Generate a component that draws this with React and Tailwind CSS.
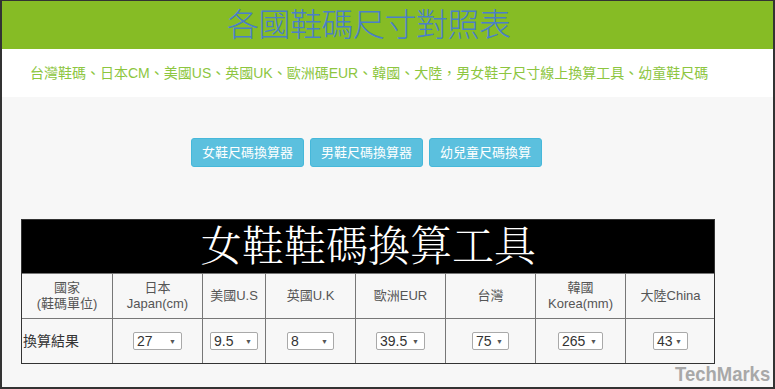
const sans = "font-['Liberation_Sans','Noto_Sans_CJK_TC',sans-serif]";

const columns = [
  { w: 'w-[90px]', lines: ['國家', '(鞋碼單位)'] },
  { w: 'w-[90px]', lines: ['日本', 'Japan(cm)'] },
  { w: 'w-[63px]', lines: ['美國U.S'] },
  { w: 'w-[90px]', lines: ['英國U.K'] },
  { w: 'w-[90px]', lines: ['歐洲EUR'] },
  { w: 'w-[90px]', lines: ['台灣'] },
  { w: 'w-[90px]', lines: ['韓國', 'Korea(mm)'] },
  { w: 'w-[90px]', lines: ['大陸China'] },
];

const picks = [
  { v: '27', w: 'w-[49px]' },
  { v: '9.5', w: 'w-[48px]' },
  { v: '8', w: 'w-[47px]' },
  { v: '39.5', w: 'w-[49px]' },
  { v: '75', w: 'w-[37px]' },
  { v: '265', w: 'w-[45px]' },
  { v: '43', w: 'w-[35px]' },
];

function FakeSelect({ v, w }) {
  return (
    <div className={`${w} h-[18px] mx-auto flex items-center justify-between border border-[#a9a9a9] rounded-[2px] bg-white pl-[3px] pr-[5px] text-[14px] leading-none text-[#333]`}>
      <span>{v}</span>
      <span className="text-[7px] text-[#555]">▼</span>
    </div>
  );
}

export default function App() {
  return (
    <div className={`relative w-[775px] h-[389px] overflow-hidden bg-[#f7f7f7] border-t border-x-2 border-b-2 border-[#333] ${sans}`}>
      {/* title band */}
      <div className="h-[48px] bg-[#86bc25] pl-[225px] flex items-center">
        <h1 className="text-[32px] leading-none font-light text-[#4a7fc8] tracking-[-0.5px]">各國鞋碼尺寸對照表</h1>
      </div>
      <div className="h-[48px] bg-white pl-[28px] flex items-center">
        <p className="text-[14px] text-[#8dc63f]">台灣鞋碼、日本CM、美國US、英國UK、歐洲碼EUR、韓國、大陸，男女鞋子尺寸線上換算工具、幼童鞋尺碼</p>
      </div>

      {/* buttons */}
      <div className="flex gap-[6px] pl-[189px] pt-[41px]">
        {['女鞋尺碼換算器', '男鞋尺碼換算器', '幼兒童尺碼換算'].map((t) => (
          <button key={t} className="w-[113px] h-[29px] rounded-[3px] bg-[#5bc0de] border border-[#46b8da] text-white text-[13px]">
            {t}
          </button>
        ))}
      </div>

      {/* converter table */}
      <div className="ml-[19px] mt-[52px] w-[694px] border border-[#333]">
        <div className="h-[53px] bg-black flex items-center justify-center text-white text-[42px] leading-none font-light font-['Liberation_Serif','Noto_Serif_CJK_TC','Noto_Sans_CJK_TC',serif]">
          女鞋鞋碼換算工具
        </div>
        <div className="flex h-[45px] border-t border-[#777] text-[13px] leading-[16px] text-[#555]">
          {columns.map((c, i) => (
            <div key={i} className={`${c.w} shrink-0 flex flex-col items-center justify-center text-center ${i > 0 ? 'border-l border-[#777]' : ''}`}>
              {c.lines.map((l) => (
                <span key={l}>{l}</span>
              ))}
            </div>
          ))}
        </div>
        <div className="flex h-[45px] border-t border-[#777] text-[14px] text-[#333]">
          <div className="w-[90px] shrink-0 flex items-center pl-[1px]">換算結果</div>
          {picks.map((p, i) => (
            <div key={i} className={`${columns[i + 1].w} shrink-0 flex items-center border-l border-[#777]`}>
              <FakeSelect {...p} />
            </div>
          ))}
        </div>
      </div>

      <div className="absolute right-[3px] bottom-[1px] origin-right scale-x-[0.88] text-[21px] leading-[24px] font-bold text-[#a8a8a8] font-['Liberation_Sans',sans-serif]">
        TechMarks
      </div>
    </div>
  );
}
